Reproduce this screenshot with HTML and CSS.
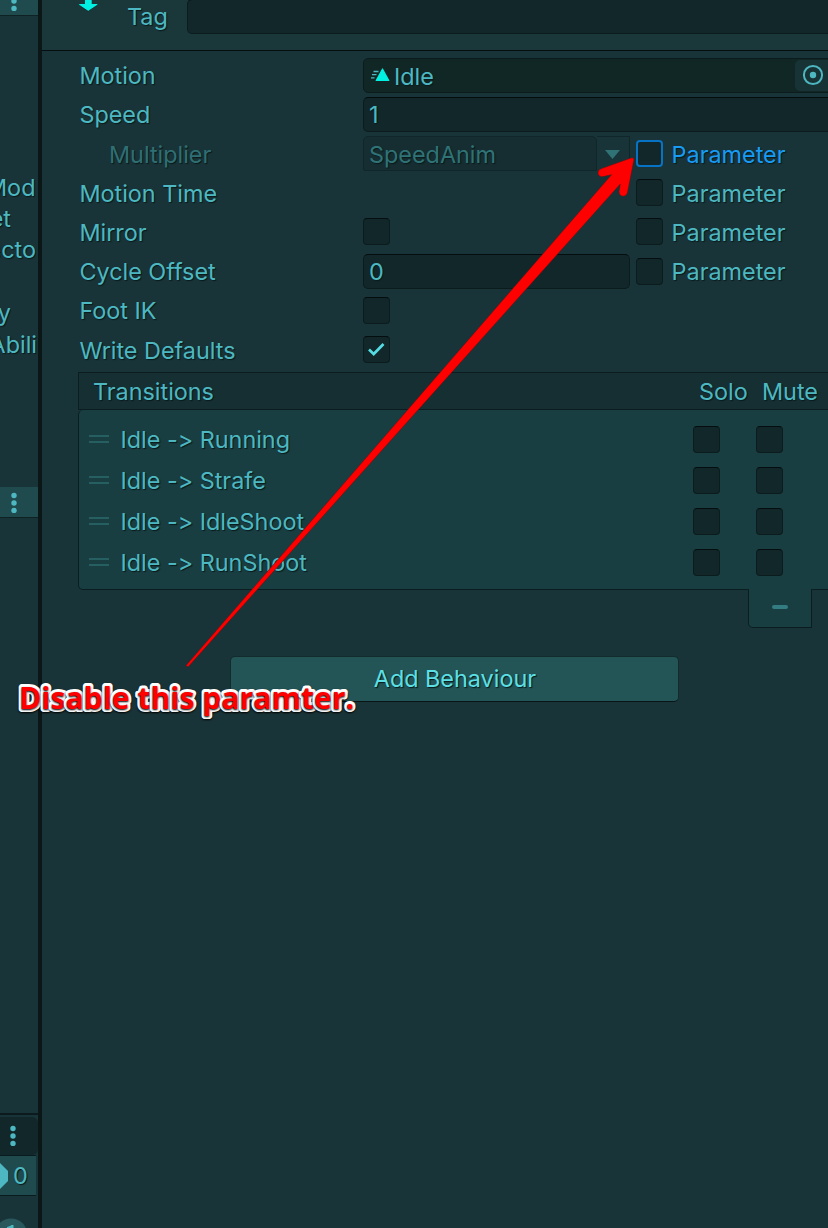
FILE: index.html
```html
<!DOCTYPE html>
<html lang="en">
<head>
<meta charset="utf-8">
<title>Inspector</title>
<link rel="stylesheet" href="styles.css">
</head>
<body>
<div class="editor">
  <aside class="side">
    <div class="side-bar side-bar-top"><svg class="dots" width="6" height="22" viewBox="0 0 6 22"><circle cx="3" cy="3.5" r="2.7"/><circle cx="3" cy="11" r="2.7"/><circle cx="3" cy="18.4" r="2.7"/></svg></div>
    <div class="side-list">
      <div class="clip"><span>Mode</span></div>
      <div class="clip fit w11"><span>et</span></div>
      <div class="clip fit w36"><span>ecto</span></div>
      <div class="clip"></div>
      <div class="clip fit w11"><span>y</span></div>
      <div class="clip fit w37"><span>Abili</span></div>
    </div>
    <div class="side-bar side-bar-mid"><svg class="dots" width="6" height="22" viewBox="0 0 6 22"><circle cx="3" cy="3.5" r="2.7"/><circle cx="3" cy="11" r="2.7"/><circle cx="3" cy="18.4" r="2.7"/></svg></div>
    <div class="side-fill"></div>
    <div class="side-tab"><svg class="dots" width="6" height="22" viewBox="0 0 6 22"><circle cx="3" cy="3.5" r="2.7"/><circle cx="3" cy="11" r="2.7"/><circle cx="3" cy="18.4" r="2.7"/></svg></div>
    <div class="counter"><svg width="8" height="26" viewBox="0 0 8 26"><path d="M0 0 8 8v10L0 26z" fill="#4db8c1"/></svg><span>0</span></div>
    <div class="side-foot"><svg width="38" height="32" viewBox="0 0 38 32"><circle cx="11" cy="39" r="16.5" fill="#28585b"/><path d="M7 31q4-1 4.500-2h2V32H7z" fill="#4db8c1"/></svg></div>
  </aside>

  <main class="inspector">
    <header class="head">
      <svg class="state-icon" width="20" height="13" viewBox="0 0 20 13"><path d="M7-2v6H1.200v1.200L10.200 11.300 19.300 5.200V4h-5.600v-6z" fill="#00f0e2"/><path d="M1.200 5.200 10.200 11.300 19.300 5.200" fill="none" stroke="#0d1f21" stroke-width=".7"/></svg>
      <span class="tag-label">Tag</span>
      <div class="input tag-input"></div>
    </header>

    <section class="props">
      <div class="row"><span class="label">Motion</span>
        <div class="input wide object">
          <svg width="19" height="16" viewBox="0 0 19 16"><path d="M11.500 2 17.800 13.500H5.200z" fill="#00f0e2" stroke="#00f0e2" stroke-linejoin="round" stroke-width="1.200"/><path d="M2.500 4.500h5M1 7.700h4.500M0 10.900h3.500" stroke="#4db8c1" stroke-width="1.300"/></svg>
          <span>Idle</span>
          <div class="picker"><svg width="22" height="22" viewBox="0 0 22 22"><circle cx="11" cy="11" r="9.100" fill="none" stroke="#4db8c1" stroke-width="2"/><circle cx="11" cy="11" r="3.200" fill="#4db8c1"/></svg></div>
        </div>
      </div>
      <div class="row"><span class="label">Speed</span><div class="input wide"><span>1</span></div></div>
      <div class="row"><span class="label nested">Multiplier</span>
        <div class="dropdown"><span class="dd-value">SpeedAnim</span><span class="dd-arrow"><svg width="15" height="9" viewBox="0 0 15 9"><path d="M0 0h15L7.500 9z" fill="#2f7377"/></svg></span></div>
        <i class="check focus"></i><span class="param active">Parameter</span></div>
      <div class="row"><span class="label">Motion Time</span><span></span><i class="check"></i><span class="param">Parameter</span></div>
      <div class="row"><span class="label">Mirror</span><i class="check"></i><i class="check"></i><span class="param">Parameter</span></div>
      <div class="row"><span class="label">Cycle Offset</span><div class="input"><span>0</span></div><i class="check"></i><span class="param">Parameter</span></div>
      <div class="row"><span class="label">Foot IK</span><i class="check"></i></div>
      <div class="row"><span class="label">Write Defaults</span><i class="check"><svg width="19" height="15" viewBox="0 0 19 15"><path d="M2 7.500 6.700 12 16.500 2" fill="none" stroke="#55dbe2" stroke-width="2.700"/></svg></i></div>
    </section>

    <section class="transitions">
      <div class="t-head"><span class="t-title">Transitions</span><span class="solo">Solo</span><span>Mute</span></div>
      <div class="t-list">
        <div class="t-row"><b class="grip"></b><span>Idle -&gt; Running</span><i class="check"></i><i class="check"></i></div>
        <div class="t-row"><b class="grip"></b><span>Idle -&gt; Strafe</span><i class="check"></i><i class="check"></i></div>
        <div class="t-row"><b class="grip"></b><span>Idle -&gt; IdleShoot</span><i class="check"></i><i class="check"></i></div>
        <div class="t-row"><b class="grip"></b><span>Idle -&gt; RunShoot</span><i class="check"></i><i class="check"></i></div>
      </div>
      <div class="remove"><b class="minus"></b></div>
    </section>

    <div class="add">Add Behaviour</div>
  </main>

  <svg class="note" width="828" height="1228" viewBox="0 0 828 1228">
    <path class="arrow" d="M186 665.500 611.500 174.700 603 176.600Q598.500 177 598 173.200 597.700 170 601.500 168.600L631 158Q634.500 157 633.800 160.500L627.500 192.500Q626.500 196.300 623 196.200 618.800 195.700 619 191.500L620.300 184 188 667Z"/>
    <text class="note-text" x="19" y="708.500" textLength="335">Disable this paramter.</text>
  </svg>
</div>
</body>
</html>
```
FILE: styles.css
```css
* { box-sizing: border-box; }
body { margin: 0; background: #193438; overflow: hidden; }
.editor {
  position: relative;
  display: flex;
  width: 828px;
  height: 1228px;
  overflow: hidden;
  font: 400 23.4px/30px Inter, "Liberation Sans", sans-serif;
  letter-spacing: -0.01px;
  color: #4db8c1;
  text-shadow: 1px 1px 1px #0a1a1c;
  white-space: nowrap;
}
svg { display: block; flex: none; }

/* left strip */
.side { display: flex; flex-direction: column; flex: none; width: 42px; border-right: 4px solid #0b1617; }
.side-bar { display: flex; align-items: center; height: 31px; padding: 1px 0 0 11.400px; background: #204b4e; border-bottom: 1px solid #0e2224; }
.side-bar-top { height: 16px; align-items: flex-end; padding-bottom: 3px; overflow: hidden; }
.dots { fill: #4db8c1; }
.side-list { height: 471px; padding-top: 156px; }
.clip { display: flex; height: 31.4px; width: 36px; overflow: hidden; align-items: center; }
.clip:first-child span { margin-left: -14px; }
.fit { justify-content: flex-end; }
.w11 { width: 11px; }
.w36 { width: 36px; }
.w37 { width: 37px; }
.side-fill { flex: 1; border-bottom: 2px solid #0b1b1d; }
.side-tab { display: flex; align-items: center; height: 38px; margin-top: 2px; padding-left: 9.5px; background: #112729; border-radius: 0 6px 6px 0; }
.counter { display: flex; align-items: center; height: 41px; width: 36px; gap: 5px; background: #204b4e; border-top: 1px solid #0b1b1d; border-bottom: 1px solid #0b1b1d; }
.side-foot { height: 32px; }

/* inspector */
.inspector { flex: none; width: 786px; overflow: hidden; }
.head { display: flex; height: 51px; background: #1a373a; border-bottom: 1px solid #050d0e; }
.state-icon { margin-left: 36px; }
.tag-label { margin: 2px 17px 0 29px; width: 43px; }
.input {
  display: flex;
  align-items: center;
  height: 35px;
  padding-left: 5px;
  background: #112729;
  border: 1px solid #0c1c1d;
  border-top-color: #050d0e;
  border-radius: 5px;
}
.input > span { padding-top: 2px; }
.tag-input { flex: 1; margin: -1px -9px 0 0; }
.props { padding: 4.6px 0 0 37px; }
.row { display: grid; grid-template-columns: 284px 267px 27px 120px; height: 39.2px; align-items: center; }
.row > :nth-child(3) { margin-left: 6px; }
.row > :nth-child(4) { margin-left: 14.6px; }
.label, .param { padding-top: 2.2px; }
.label { padding-left: 0.4px; }
.nested { padding-left: 30px; color: #2f6f74; }
.wide { grid-column: 2 / 5; width: 480px; }
.object { padding-left: 7px; border-top-color: #0c1c1d; background: #112726; }
.object > span { width: 40px; margin-left: 4px; padding-top: 3px; }
.picker { display: flex; align-items: center; width: 45px; height: 31px; margin-left: 361px; padding-left: 7px; background: #183336; border-radius: 5px; }
.dropdown { display: flex; height: 35px; color: #2f7377; }
.dd-value { width: 234px; padding: 3px 0 0 5px; background: #162e31; border: 1px solid #10262a; border-radius: 5px 5px 0 2px; }
.dd-arrow { display: flex; align-items: center; flex: 1; padding-left: 8px; border-top: 1px solid #10262a; border-right: 1px solid #10262a; }
.check {
  display: flex;
  align-items: center;
  justify-content: center;
  width: 27px;
  height: 27px;
  background: #112729;
  border: 1px solid #0c1c1d;
  border-top-color: #050d0e;
  border-radius: 4px;
}
.focus { border: 2px solid #0873c4; border-radius: 4px; }
.active { color: #179bf4; }

.transitions { margin-left: 36px; margin-top: 3.4px; width: 760px; }
.t-head { display: flex; align-items: center; height: 38px; padding: 1px 0 0 14px; background: #162f33; border: 1px solid #0c1d1f; }
.t-title { width: 606px; }
.solo { width: 63px; }
.t-list { height: 180px; padding: 8.2px 0 0 10px; background: #193e41; border: 1px solid #0c1d1f; border-top: 0; border-radius: 5px; }
.t-row { display: grid; grid-template-columns: 31.5px 572.5px 63px 27px; height: 41.2px; align-items: center; }
.t-row > span { padding-top: 1px; }
.grip { width: 20px; height: 8px; margin-top: -1px; border-top: 2px solid #265f62; border-bottom: 2px solid #265f62; }
.remove { display: flex; align-items: center; justify-content: center; position: relative; width: 64px; height: 39px; margin: -1px 0 0 670px; background: #193e41; border: 1px solid #0c1d1f; border-top: 0; border-radius: 0 0 0 5px; }
.minus { width: 16px; height: 4px; margin-top: -3px; border-radius: 2px; background: #337c81; }
.add {
  width: 449px;
  height: 46px;
  margin: 28px 0 0 188.4px;
  padding-top: 7px;
  text-align: center;
  color: #5ce0e6;
  background: #235456;
  border: 1px solid #132b2d;
  border-bottom-color: #081415;
  border-radius: 5px;
}

/* annotation drawn over the panel */
.note { position: absolute; left: 0; top: 0; }
.arrow { fill: #f00; stroke: #5a1214; stroke-width: .5; }
.note-text {
  font: 700 30px "Open Sans", "Noto Sans", sans-serif;
  letter-spacing: 0;
  fill: #f00;
  stroke: #fff;
  stroke-width: 6px;
  stroke-linejoin: round;
  paint-order: stroke;
  text-shadow: 0 1px 2px #000;
}
```
